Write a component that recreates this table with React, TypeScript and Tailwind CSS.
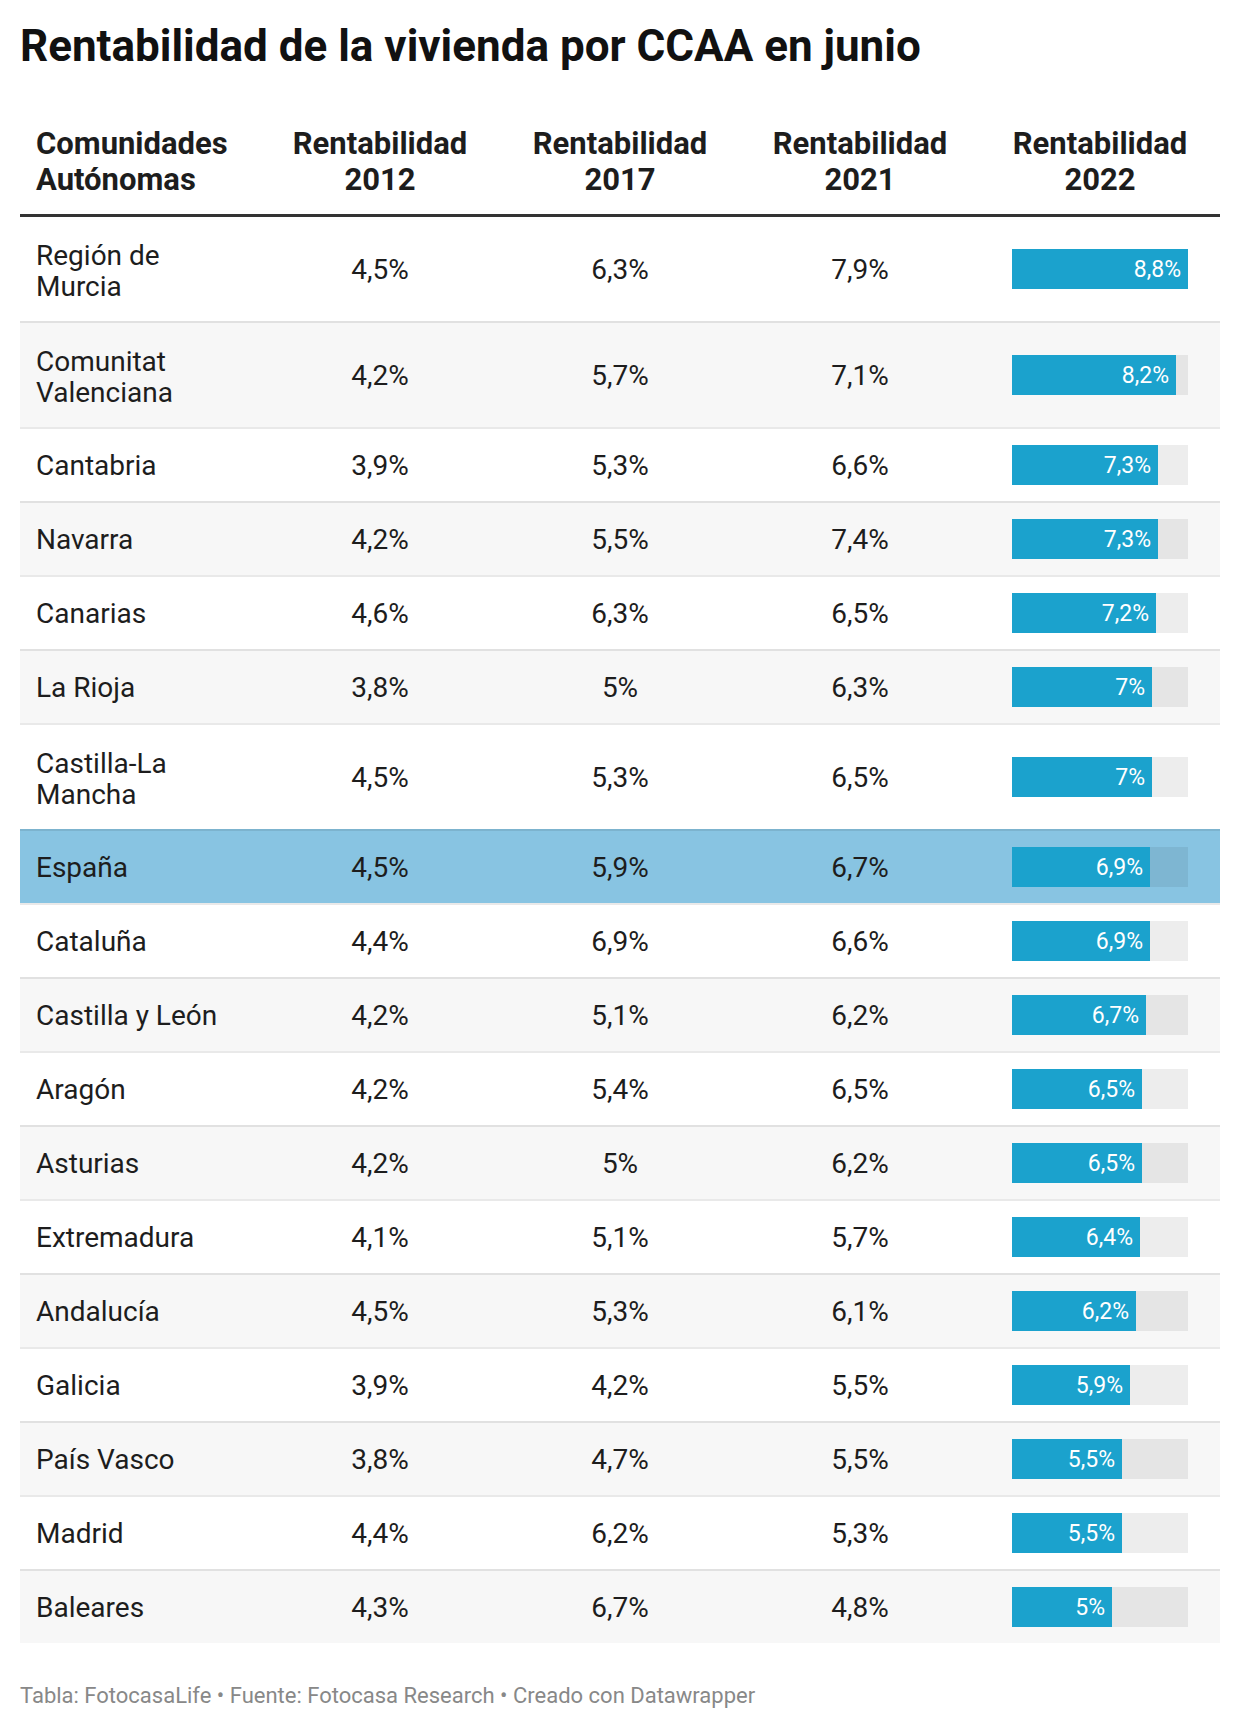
import React from "react";

type Row = { name: string[]; a: string; b: string; c: string; v: number; hl?: boolean };

const rows: Row[] = [
  { name: ["Región de", "Murcia"], a: "4,5%", b: "6,3%", c: "7,9%", v: 8.8 },
  { name: ["Comunitat", "Valenciana"], a: "4,2%", b: "5,7%", c: "7,1%", v: 8.2 },
  { name: ["Cantabria"], a: "3,9%", b: "5,3%", c: "6,6%", v: 7.3 },
  { name: ["Navarra"], a: "4,2%", b: "5,5%", c: "7,4%", v: 7.3 },
  { name: ["Canarias"], a: "4,6%", b: "6,3%", c: "6,5%", v: 7.2 },
  { name: ["La Rioja"], a: "3,8%", b: "5%", c: "6,3%", v: 7 },
  { name: ["Castilla-La", "Mancha"], a: "4,5%", b: "5,3%", c: "6,5%", v: 7 },
  { name: ["España"], a: "4,5%", b: "5,9%", c: "6,7%", v: 6.9, hl: true },
  { name: ["Cataluña"], a: "4,4%", b: "6,9%", c: "6,6%", v: 6.9 },
  { name: ["Castilla y León"], a: "4,2%", b: "5,1%", c: "6,2%", v: 6.7 },
  { name: ["Aragón"], a: "4,2%", b: "5,4%", c: "6,5%", v: 6.5 },
  { name: ["Asturias"], a: "4,2%", b: "5%", c: "6,2%", v: 6.5 },
  { name: ["Extremadura"], a: "4,1%", b: "5,1%", c: "5,7%", v: 6.4 },
  { name: ["Andalucía"], a: "4,5%", b: "5,3%", c: "6,1%", v: 6.2 },
  { name: ["Galicia"], a: "3,9%", b: "4,2%", c: "5,5%", v: 5.9 },
  { name: ["País Vasco"], a: "3,8%", b: "4,7%", c: "5,5%", v: 5.5 },
  { name: ["Madrid"], a: "4,4%", b: "6,2%", c: "5,3%", v: 5.5 },
  { name: ["Baleares"], a: "4,3%", b: "6,7%", c: "4,8%", v: 5 },
];

const fmt = (v: number) => v.toString().replace(".", ",") + "%";

export default function App() {
  return (
    <div
      className="w-[1240px] min-h-[1730px] bg-white px-[20px] pt-[20px] text-[#1d1d1d]"
      style={{ fontFamily: "Roboto, 'Liberation Sans', sans-serif" }}
    >
      <h1 className="text-[44px] leading-[52px] font-bold text-[#111111]">
        Rentabilidad de la vivienda por CCAA en junio
      </h1>

      <div className="mt-[54px]">
        <div className="grid grid-cols-5 border-b-[3px] border-[#333333] pb-[16px] text-[31px] leading-[36px] font-bold">
          <div className="pl-[16px]">
            Comunidades
            <br />
            Autónomas
          </div>
          {["2012", "2017", "2021", "2022"].map((y) => (
            <div key={y} className="text-center">
              Rentabilidad
              <br />
              {y}
            </div>
          ))}
        </div>

        {rows.map((r, i) => {
          const bg = r.hl ? "bg-[#88c4e2]" : i % 2 === 1 ? "bg-[#f7f7f7]" : "bg-white";
          const multi = r.name.length > 1;
          return (
            <div
              key={i}
              className={`grid grid-cols-5 items-center text-[28px] leading-[31px] py-[16px] ${bg} ${
                i > 0 ? "border-t-2 border-black/[0.085]" : ""
              }`}
            >
              <div className={multi ? "pl-[16px] pt-[7px] pb-[3px]" : "pl-[16px] pt-[5px] pb-[4px]"}>
                {r.name.map((n, k) => (
                  <div key={k}>{n}</div>
                ))}
              </div>
              <div className="text-center">{r.a}</div>
              <div className="text-center">{r.b}</div>
              <div className="text-center">{r.c}</div>
              <div className="flex justify-center">
                <div className="relative h-[40px] w-[176px] bg-black/[0.07]">
                  <div
                    className="absolute left-0 top-0 flex h-[40px] items-center justify-end bg-[#1ba2cd] pr-[7px] text-[23px] leading-none text-white"
                    style={{ width: `${(r.v / 8.8) * 176}px` }}
                  >
                    {fmt(r.v)}
                  </div>
                </div>
              </div>
            </div>
          );
        })}
      </div>

      <div className="mt-[40px] text-[22px] leading-[26px] text-[#888888]">
        Tabla: FotocasaLife • Fuente: Fotocasa Research • Creado con Datawrapper
      </div>
    </div>
  );
}
